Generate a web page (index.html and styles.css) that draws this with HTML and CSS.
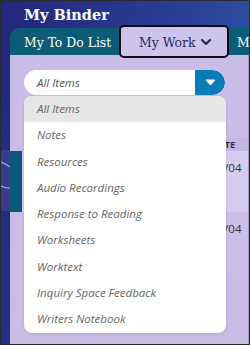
FILE: index.html
```html
<!DOCTYPE html>
<html lang="en">
<head>
    <meta charset="UTF-8">
    <meta name="viewport" content="width=device-width, initial-scale=1.0">
    <title>My Binder</title>
    <link rel="stylesheet" href="styles.css">
</head>
<body>
    <div class="screen">
        <header class="binder-head">
            <h1>My Binder</h1>
        </header>

        <aside class="rail">
            <svg class="rail-art" width="9" height="61" viewBox="0 0 9 61">
                <rect width="9" height="61" fill="#3b3a8c"/>
                <path d="M0 12 Q5 14 9 17" stroke="#7fb6e6" stroke-width="1.2" fill="none"/>
                <path d="M0 36 Q5 38 9 38" stroke="#7fb6e6" stroke-width="1.2" fill="none"/>
            </svg>
        </aside>

        <nav class="tabs">
            <div class="tab">My To Do List</div>
            <div class="tab active">
                My Work
                <svg width="12" height="8" viewBox="0 0 12 8">
                    <polyline points="2,2 6,6 10,2" stroke="#1f2d5c" stroke-width="2.2" fill="none" stroke-linecap="round" stroke-linejoin="round"/>
                </svg>
            </div>
            <div class="tab">My Notes</div>
        </nav>

        <main class="panel">
            <div class="filter">
                <div class="select">
                    <span class="select-value">All Items</span>
                    <span class="select-btn">
                        <svg width="11" height="7" viewBox="0 0 11 7">
                            <path d="M1 1 L10 1 L5.5 6 Z" fill="#fff" stroke="#fff" stroke-width="1" stroke-linejoin="round"/>
                        </svg>
                    </span>
                </div>

                <ul class="menu">
                    <li class="selected">All Items</li>
                    <li>Notes</li>
                    <li>Resources</li>
                    <li>Audio Recordings</li>
                    <li>Response to Reading</li>
                    <li>Worksheets</li>
                    <li>Worktext</li>
                    <li>Inquiry Space Feedback</li>
                    <li>Writers Notebook</li>
                </ul>
            </div>

            <table class="work-table">
                <thead>
                    <tr>
                        <th class="flag"></th>
                        <th class="title"></th>
                        <th class="date">DATE</th>
                    </tr>
                </thead>
                <tbody>
                    <tr class="row-current">
                        <td class="flag"></td>
                        <td class="title"></td>
                        <td class="date">10/04</td>
                    </tr>
                    <tr>
                        <td class="flag"></td>
                        <td class="title"></td>
                        <td class="date">10/04</td>
                    </tr>
                </tbody>
            </table>
        </main>
    </div>
</body>
</html>
```

FILE: styles.css
```css
body {
    margin: 0;
    font-family: "Open Sans", Arial, sans-serif;
}
.screen {
    width: 250px;
    height: 345px;
    box-sizing: border-box;
    border: 1px solid #2a2a33;
    background: linear-gradient(100deg, #24267a 0%, #2a3f95 60%, #3157a8 100%);
    display: grid;
    grid-template-columns: 9px minmax(0, 1fr);
    grid-template-rows: 27px 27px 1fr;
    overflow: hidden;
}
.binder-head {
    grid-column: 1 / 3;
    padding-left: 23px;
}
.binder-head h1 {
    margin: 0;
    font-family: "DejaVu Serif", "Liberation Serif", serif;
    font-size: 14.5px;
    font-weight: bold;
    color: #fff;
    line-height: 27px;
}
.rail {
    grid-column: 1;
    grid-row: 2 / 4;
}
.rail-art {
    display: block;
    margin-top: 122px;
}
.tabs {
    grid-column: 2;
    grid-row: 2;
    display: flex;
    background-color: #0c5b77;
    border-top-left-radius: 9px;
    font-family: "DejaVu Serif", "Liberation Serif", serif;
    font-size: 13.8px;
    font-stretch: condensed;
    color: #fff;
    position: relative;
    z-index: 1;
}
.tab {
    display: flex;
    align-items: center;
    flex-shrink: 0;
    white-space: nowrap;
    padding-left: 14px;
    width: 95px;
}
.tab.active {
    box-sizing: border-box;
    width: 110px;
    margin: -3px 0 -3px 0;
    padding: 0 0 0 18px;
    gap: 5px;
    background-color: #cdc4ec;
    color: #1f2d5c;
    border: 2px solid #0d0d12;
    border-radius: 5px;
}
.tab:last-child {
    padding-left: 8px;
}
.panel {
    grid-column: 2;
    grid-row: 3;
    background-color: #c9bde8;
    border-right: 1px solid #a597d4;
    padding-top: 15px;
}
.filter {
    position: relative;
    margin-left: 14px;
    width: 202px;
}
.select {
    display: flex;
    height: 25px;
    width: 201px;
    background-color: #fff;
    border-radius: 13px;
    overflow: hidden;
}
.select-value {
    flex: 1;
    padding-left: 13px;
    line-height: 25px;
    font-size: 11.5px;
    font-style: italic;
    color: #555;
}
.select-btn {
    width: 30px;
    background-color: #0a7bb6;
    display: flex;
    align-items: center;
    justify-content: center;
    border-radius: 0 13px 13px 0;
}
.menu {
    position: absolute;
    top: 26px;
    left: 0;
    width: 202px;
    margin: 0;
    padding: 0;
    list-style: none;
    background-color: #fff;
    border-radius: 8px;
    box-shadow: 0 1px 3px rgba(0, 0, 0, 0.15);
    overflow: hidden;
    z-index: 2;
}
.menu li {
    height: 26.3px;
    line-height: 26.3px;
    padding-left: 13px;
    font-size: 11.5px;
    font-style: italic;
    color: #666;
}
.menu li.selected {
    background-color: #e7e7e7;
}
.work-table {
    margin-top: 43px;
    width: 100%;
    border-collapse: collapse;
    font-family: "Open Sans", Arial, sans-serif;
    color: #333;
}
.work-table th {
    height: 13px;
    padding: 0;
    font-size: 9.5px;
    font-weight: bold;
    text-align: left;
}
.work-table th.date {
    background-color: #c3b5e4;
}
.work-table td {
    padding: 0;
    vertical-align: top;
    font-size: 11.5px;
}
.work-table .flag {
    width: 12px;
}
.work-table .date {
    width: 37px;
    padding-left: 2px;
}
.work-table td.date {
    padding-top: 9px;
}
.work-table tbody tr {
    height: 61px;
}
.row-current td {
    background-color: #d6ccf0;
}
.row-current td.flag {
    background-color: #0b5b78;
}
.work-table tbody tr:last-child td.date {
    background-color: #cbbfe9;
}
```
